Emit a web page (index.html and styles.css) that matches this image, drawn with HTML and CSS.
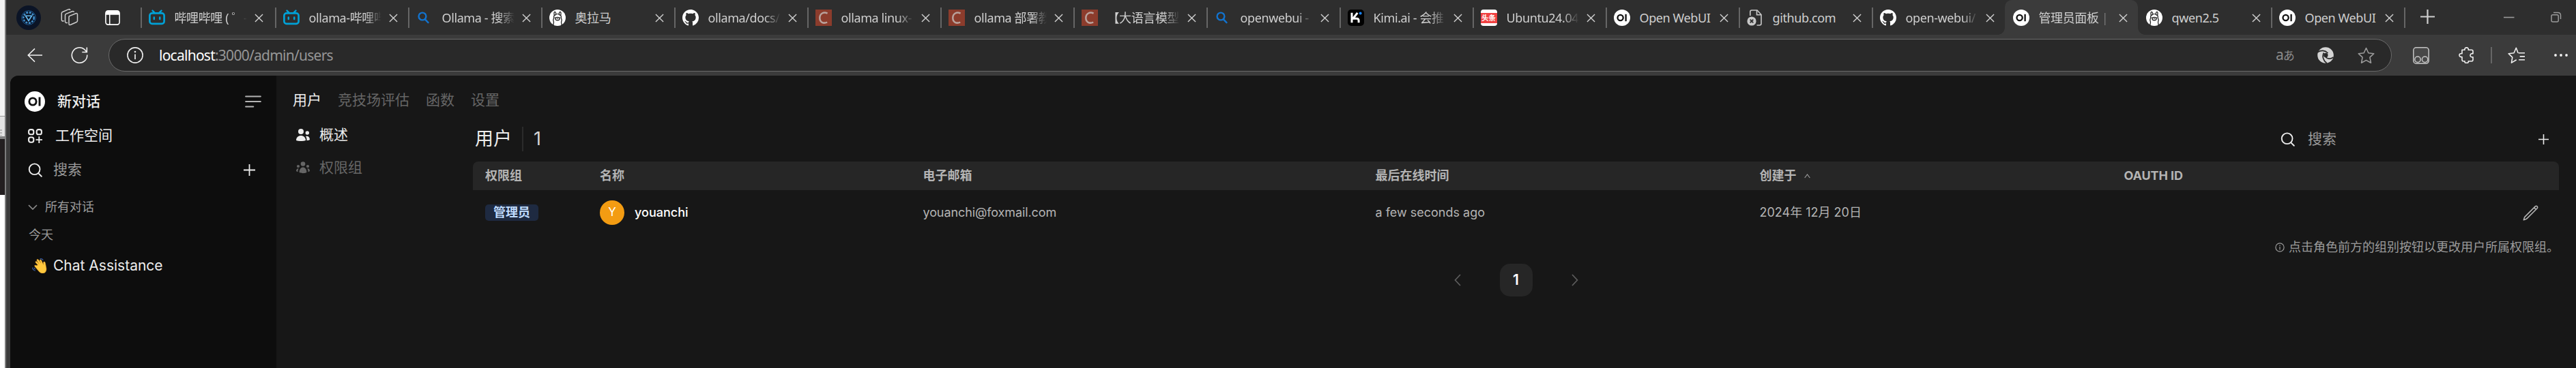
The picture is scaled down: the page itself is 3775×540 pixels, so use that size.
FILE: index.html
```html
<!DOCTYPE html>
<html lang="zh-CN">
<head>
<meta charset="utf-8">
<title>管理员面板 | Open WebUI</title>
<link rel="stylesheet" href="styles.css">
</head>
<body>
<svg class="defs" aria-hidden="true">
  <symbol id="oi" viewBox="0 0 24 24"><circle cx="12" cy="12" r="12" fill="#fff"/><circle cx="9.6" cy="12" r="4.1" fill="none" stroke="#111" stroke-width="2.3"/><path d="M17.6 6.8v10.4" stroke="#111" stroke-width="2.3"/></symbol>
  <symbol id="bili" viewBox="0 0 24 24"><g fill="none" stroke="#00a1d6" stroke-linecap="round"><path d="M5.5 1.6l3 3M18.5 1.6l-3 3" stroke-width="2.4"/><rect x="1.4" y="5.4" width="21.2" height="15.4" rx="3.4" stroke-width="2.7"/><path d="M7.8 11.6v2.4M16.2 11.6v2.4" stroke-width="2.5"/></g></symbol>
  <symbol id="bing" viewBox="0 0 24 24"><g fill="none" stroke="#1273ce" stroke-width="2.4" stroke-linecap="round"><circle cx="9" cy="10" r="5.4"/><path d="M12.900 14.400l4.600 4.800"/></g></symbol>
  <symbol id="llama" viewBox="0 0 24 24"><circle cx="12" cy="12" r="12" fill="#fff"/><g fill="none" stroke="#222" stroke-width="1.3"><path d="M6 24c-.6-3 .8-4 .4-6-.9-2-.9-3.600.4-5.600C6.200 10 7 8.300 8.800 8c1.800-1.800 4.600-1.800 6.400 0 1.800.3 2.600 2 2 4.400 1.300 2 1.300 3.600.4 5.600-.4 2 1 3 .4 6"/><path d="M7.300 8.600C6.700 5 7 3.300 8 3.300s1.700 1.700 1.800 4M16.700 8.600c.6-3.600.3-5.300-.7-5.300s-1.700 1.700-1.800 4"/><ellipse cx="12" cy="13.600" rx="3" ry="2.300"/></g><circle cx="8.400" cy="12" r=".8" fill="#222"/><circle cx="15.600" cy="12" r=".8" fill="#222"/><circle cx="12" cy="13.400" r=".8" fill="#222"/></symbol>
  <symbol id="github" viewBox="0 0 16 16"><path fill="#fff" d="M8 0C3.580 0 0 3.580 0 8c0 3.540 2.290 6.530 5.470 7.590.4.070.55-.17.55-.38 0-.19-.01-.82-.01-1.490-2.010.37-2.530-.49-2.690-.94-.09-.23-.48-.94-.82-1.130-.28-.15-.68-.52-.01-.53.63-.01 1.080.58 1.230.82.72 1.210 1.870.87 2.330.66.070-.52.28-.87.51-1.070-1.780-.2-3.640-.89-3.640-3.950 0-.87.31-1.590.82-2.150-.08-.2-.36-1.020.08-2.120 0 0 .67-.21 2.200.82.64-.18 1.320-.27 2-.27s1.360.09 2 .27c1.530-1.040 2.200-.82 2.200-.82.44 1.100.16 1.920.08 2.120.51.56.82 1.270.82 2.150 0 3.070-1.870 3.750-3.650 3.950.29.25.54.73.54 1.480 0 1.070-.01 1.930-.01 2.200 0 .21.15.46.55.38A8.010 8.010 0 0 0 16 8c0-4.420-3.580-8-8-8z"/></symbol>
  <symbol id="csdn" viewBox="0 0 24 24"><path fill="#8c3c2c" d="M0 0h24v24H0z"/><path d="M17.600 5.600C12 2.600 6.300 6 6.300 12.300c0 6.500 5.200 8.800 10.900 6.300" fill="none" stroke="#b9a29c" stroke-width="2.500"/></symbol>
  <symbol id="kimi" viewBox="0 0 24 24"><rect width="24" height="24" rx="5" fill="#000"/><path d="M6 4.800v14.400M7 13.200h6.400c2.200 0 2.700 1.200 2.700 3v3M8 13l6.300-8.200" fill="none" stroke="#fff" stroke-width="3"/><circle cx="18.600" cy="5.600" r="2" fill="#1783ff"/></symbol>
  <symbol id="page" viewBox="0 0 24 24"><g fill="none" stroke="#c8c8c8" stroke-width="1.600"><path d="M4.800 9V3.500C4.800 2 5.600 1 7 1h8l6 6.500v13c0 1.600-1 2.500-2.500 2.500h-4"/><path d="M14.500 1v6.700H21"/></g><circle cx="7" cy="17" r="6.600" fill="#c8c8c8"/><path d="M4.700 14.700l4.600 4.600M9.300 14.700l-4.600 4.600" stroke="#2e2e2e" stroke-width="1.900"/></symbol>
  <symbol id="x" viewBox="0 0 14 14"><path d="M1 1l12 12M13 1L1 13" fill="none" stroke="#d0d0d0" stroke-width="1.500"/></symbol>
  <symbol id="search" viewBox="0 0 24 24"><g fill="none" stroke="currentColor" stroke-width="2.200" stroke-linecap="round"><circle cx="11" cy="10.600" r="9"/><path d="M17.600 17.600l5 5"/></g></symbol>
  <symbol id="plus" viewBox="0 0 16 16"><path d="M8 0v16M0 8h16" stroke="currentColor" stroke-width="1.700"/></symbol>
</svg>

<div class="screen">
  <div class="behind"><i class="pane"></i><i class="grip"></i><i class="dark"></i></div>
  <div class="window">
    <div class="tabstrip">
      <svg class="profile" viewBox="0 0 36 36"><circle cx="18" cy="18" r="18" fill="#0b1426"/><g fill="none"><circle cx="18" cy="18" r="10.300" stroke="#1d5a93" stroke-width="1"/><circle cx="18" cy="18" r="7.700" stroke="#3f8cc8" stroke-width="2.600" stroke-dasharray="3 1.600"/><path d="M13.500 15.200h9L18 22.500z" stroke="#69bdf2" stroke-width="1.600"/></g></svg>
      <svg class="stack" viewBox="0 0 26 26"><g fill="none" stroke="#cfcfcf" stroke-width="1.500" stroke-linejoin="round"><path d="M12.600 11.600l9.500-3.800q2.400-.8 2.400 1.500v9.200q0 1.400-1.400 2l-8.600 3.700q-2.500 1-2.500-1.500v-9.200q0-1.300.6-1.900z"/><path d="M10 21.200c-2 .7-3.500.4-3.500-1.600v-9.200q0-1.500 1.300-2l9-3.700q2.200-.7 2.700 1"/><path d="M5 18.600c-2.500.8-3.700.2-3.700-1.800V7.500q0-1.500 1.400-2l8.400-3.600q2.200-.8 2.900.8"/></g></svg>
      <svg class="vtabs" viewBox="0 0 22 22"><rect x=".9" y=".9" width="20.200" height="20.200" rx="3.500" fill="none" stroke="#fff" stroke-width="1.600"/><path d="M1 6.700V4Q1 1 4 1h14q3 0 3 3v2.700zM6 6h1.500v15H6z" fill="#fff"/></svg>
      <div class="tabs">
        <div class="tab"><i></i><svg><use href="#bili"/></svg><span class="fade">哔哩哔哩 ( ゜-</span><svg class="x"><use href="#x"/></svg></div>
        <div class="tab"><i></i><svg><use href="#bili"/></svg><span class="fade">ollama-哔哩哔</span><svg class="x"><use href="#x"/></svg></div>
        <div class="tab"><i></i><svg><use href="#bing"/></svg><span class="fade">Ollama - 搜索</span><svg class="x"><use href="#x"/></svg></div>
        <div class="tab"><i></i><svg><use href="#llama"/></svg><span>奥拉马</span><svg class="x"><use href="#x"/></svg></div>
        <div class="tab"><i></i><svg><use href="#github"/></svg><span class="fade">ollama/docs/</span><svg class="x"><use href="#x"/></svg></div>
        <div class="tab"><i></i><svg><use href="#csdn"/></svg><span class="fade">ollama linux-</span><svg class="x"><use href="#x"/></svg></div>
        <div class="tab"><i></i><svg><use href="#csdn"/></svg><span class="fade">ollama 部署教</span><svg class="x"><use href="#x"/></svg></div>
        <div class="tab"><i></i><svg><use href="#csdn"/></svg><span class="fade">【大语言模型</span><svg class="x"><use href="#x"/></svg></div>
        <div class="tab"><i></i><svg><use href="#bing"/></svg><span class="fade">openwebui -</span><svg class="x"><use href="#x"/></svg></div>
        <div class="tab"><i></i><svg><use href="#kimi"/></svg><span class="fade">Kimi.ai - 会推</span><svg class="x"><use href="#x"/></svg></div>
        <div class="tab"><i></i><b class="toutiao">头条</b><span class="fade">Ubuntu24.04</span><svg class="x"><use href="#x"/></svg></div>
        <div class="tab"><i></i><svg><use href="#oi"/></svg><span>Open WebUI</span><svg class="x"><use href="#x"/></svg></div>
        <div class="tab"><i></i><svg><use href="#page"/></svg><span>github.com</span><svg class="x"><use href="#x"/></svg></div>
        <div class="tab"><i></i><svg><use href="#github"/></svg><span class="fade">open-webui/</span><svg class="x"><use href="#x"/></svg></div>
        <div class="tab active"><i></i><svg><use href="#oi"/></svg><span class="fade">管理员面板 |</span><svg class="x"><use href="#x"/></svg></div>
        <div class="tab"><i class="none"></i><svg><use href="#llama"/></svg><span>qwen2.5</span><svg class="x"><use href="#x"/></svg></div>
        <div class="tab"><i></i><svg><use href="#oi"/></svg><span>Open WebUI</span><svg class="x"><use href="#x"/></svg></div>
        <div class="tab end"><i></i></div>
      </div>
      <svg class="newtab"><use href="#plus"/></svg>
      <svg class="min" viewBox="0 0 16 16"><path d="M0 8.500h15.500" stroke="#9a9a9a" stroke-width="1.600"/></svg>
      <svg class="restore" viewBox="0 0 16 16"><g fill="none" stroke="#9a9a9a" stroke-width="1.500"><rect x="1" y="4.700" width="10.200" height="10.300" rx="2"/><path d="M4 1.500h6.500q4 0 4 4V11"/></g></svg>
    </div>

    <div class="toolbar">
      <svg class="back" viewBox="0 0 24 24"><path d="M24 12H1.500M12 1.500L1.300 12 12 22.500" fill="none" stroke="#f2f2f2" stroke-width="1.600"/></svg>
      <svg class="reload" viewBox="0 0 24 24"><path d="M23.200 11.500A11.200 11.200 0 1 1 19.500 3.700L22.500 7M22.800.5v7h-7" fill="none" stroke="#f2f2f2" stroke-width="1.600"/></svg>
      <div class="address">
        <svg class="info" viewBox="0 0 24 24"><circle cx="12" cy="12" r="11.100" fill="none" stroke="#ececec" stroke-width="1.600"/><path d="M12 10.500v7.500" stroke="#ececec" stroke-width="1.700"/><circle cx="12" cy="7" r="1.300" fill="#ececec"/></svg>
        <div class="url"><b>localhost</b>:3000/admin/users</div>
        <div class="lang">a<small>あ</small></div>
        <svg class="swirl" viewBox="0 0 24 24"><circle cx="12" cy="12" r="11.800" fill="#d4d4d4"/><g fill="none" stroke="#292929" stroke-width="1.700"><path d="M.5 7.500C5 4.500 11 4.500 15.500 9"/><path d="M9.500 8.500C6.500 13 8.500 20 14 24"/><path d="M23.500 15C19 18.500 14.500 17.500 12 14.500"/></g><circle cx="12.300" cy="12" r="3.200" fill="#292929"/></svg>
        <svg class="star" viewBox="0 0 24 24"><path d="M12 1.400l3.200 7 7.600.9-5.600 5.200 1.500 7.800L12 18.600l-6.700 3.700 1.500-7.800L1.200 9.300l7.600-.9z" fill="none" stroke="#9c9c9c" stroke-width="1.500" stroke-linejoin="round"/></svg>
      </div>
      <svg class="ext1" viewBox="0 0 24 25"><g fill="none" stroke="#c4c4c4" stroke-width="1.500"><rect x=".8" y=".8" width="22.400" height="23.400" rx="4" fill="#484848"/><circle cx="7" cy="18.300" r="4.200"/><circle cx="17.600" cy="18.300" r="4.200"/></g></svg>
      <svg class="puzzle" viewBox="0 0 24 24"><path d="M5 4.300h4C8.600 2 9.800.900 11.600.900S14.700 2 14.300 4.300H19q2 0 2 2v3.400c-2-.4-4 .4-4 2.500s2 2.900 4 2.500v4q0 2-2 2h-4.700c.4 2-.7 2.700-2.700 2.700s-3-.7-2.600-2.700H7q-2 0-2-2v-4.200c-2.500.4-4-.8-4-2.500s1.500-2.800 4-2.400z" fill="none" stroke="#f0f0f0" stroke-width="1.600" stroke-linejoin="round"/></svg>
      <i class="bar"></i>
      <svg class="favs" viewBox="0 0 24 24"><path d="M15 8.400h9M17 13.300h7M15.500 18h8.500" stroke="#f0f0f0" stroke-width="1.600"/><path d="M14.500 8.400L11.800 1.200 8.700 8.400l-7.600.9 5.400 5.200-1.300 7.700 7-4.200" fill="none" stroke="#f0f0f0" stroke-width="1.500" stroke-linejoin="round"/></svg>
      <svg class="dots" viewBox="0 0 20 4"><g fill="#f0f0f0"><circle cx="2" cy="2" r="1.900"/><circle cx="10" cy="2" r="1.900"/><circle cx="18" cy="2" r="1.900"/></g></svg>
    </div>

    <div class="page">
      <aside class="side">
        <div class="row new"><svg class="logo"><use href="#oi"/></svg><span>新对话</span><svg class="burger" viewBox="0 0 24 18"><path d="M1.200 1.500h21.600M1.200 9h21.600M1.200 16.500h11" stroke="#b4b4b4" stroke-width="2.200" stroke-linecap="round"/></svg></div>
        <div class="row work"><svg viewBox="0 0 21 21"><g fill="none" stroke="#ececec" stroke-width="2.100"><rect x="1.100" y="1.100" width="7.200" height="7.200" rx="2.600"/><rect x="12.700" y="1.100" width="7.200" height="7.200" rx="2.600"/><rect x="1.100" y="12.500" width="7.200" height="7.200" rx="2.600"/><path d="M16.300 11.300v9.600M11.500 16.100h9.600" stroke-width="1.900"/></g></svg><span>工作空间</span></div>
        <div class="row find"><svg class="s"><use href="#search"/></svg><span>搜索</span><svg class="p"><use href="#plus"/></svg></div>
        <div class="row all"><svg viewBox="0 0 14 8"><path d="M1 1l6 6 6-6" fill="none" stroke="#8a8a8a" stroke-width="1.700"/></svg><span>所有对话</span></div>
        <div class="row today">今天</div>
        <div class="row chat"><svg viewBox="0 0 22 22"><path d="M9.500 10L6.300 6.400q-.8-1.300.3-1.900.9-.4 1.700.5l3 3.400-3.100-5Q7.600 2 8.700 1.500q1-.3 1.800.8l3.500 5-1.600-3.600q-.4-1.300.7-1.600 1-.2 1.500.8l3.100 6.600-.2-3q0-1.500 1.300-1.500 1.300.2 1.600 1.900l1.500 7.800c.4 4.600-1.800 7-4.800 7.300-2.400.2-4.600-.9-6.300-3L5 11.900q-.7-1.200.2-1.700.8-.4 1.800.5z" transform="translate(-1 0)" fill="#ffc83d" stroke="#e0982c" stroke-width=".5"/><path d="M.7 13.500q.3 4 4 4.700M3.300 13.700q0 1.800 1.500 2.300M11.500.8q3-.6 4.800 2" fill="none" stroke="#3a5fa8" stroke-width="1.200"/></svg><span>Chat Assistance</span></div>
      </aside>
      <main class="main">
        <nav class="top"><span class="on">用户</span><span>竞技场评估</span><span>函数</span><span>设置</span></nav>
        <div class="body">
          <nav class="sub">
            <div class="on"><svg viewBox="0 0 20 18" fill="currentColor"><circle cx="7" cy="4" r="4"/><circle cx="16.300" cy="6" r="2.700"/><path d="M0 17c0-9.300 14-9.300 14 0-4 1.400-10 1.400-14 0zM15.500 17.200c.2-2.800-.5-4.700-1.500-6 3-1.400 6 .8 6 4.800-1.200.8-2.800 1.200-4.500 1.200z"/></svg>概述</div>
            <div><svg viewBox="0 0 20 18" fill="currentColor"><circle cx="10" cy="3.500" r="3.300"/><circle cx="3" cy="7" r="2.100"/><circle cx="17" cy="7" r="2.100"/><path d="M4.600 16c0-10 10.800-10 10.800 0-3 1.600-7.800 1.600-10.800 0zM0 14c0-2.700 1.700-4.200 3.800-3.800-1 1.400-1.400 3-1.300 5Q1 15 0 14zM20 14c0-2.700-1.700-4.200-3.800-3.800 1 1.400 1.400 3 1.300 5Q19 15 20 14z"/></svg>权限组</div>
          </nav>
          <section class="users">
            <div class="head"><h1>用户</h1><i></i><span class="count">1</span><svg class="s"><use href="#search"/></svg><span class="q">搜索</span><svg class="p"><use href="#plus"/></svg></div>
            <div class="grid th"><span>权限组</span><span>名称</span><span>电子邮箱</span><span>最后在线时间</span><span class="created">创建于<svg viewBox="0 0 9 7"><path d="M.7 6l3.800-5 3.800 5" fill="none" stroke="#9b9b9b" stroke-width="1.200"/></svg></span><span class="oauth">OAUTH ID</span></div>
            <div class="grid tr"><span><b class="badge">管理员</b></span><span class="who"><em>Y</em><b>youanchi</b></span><span class="mail">youanchi@foxmail.com</span><span>a few seconds ago</span><span>2024年 12月 20日</span><span class="edit"><svg viewBox="0 0 24 24"><path d="m16.862 4.487 1.687-1.688a1.875 1.875 0 1 1 2.652 2.652L6.832 19.820a4.500 4.500 0 0 1-1.897 1.130l-2.685.8.8-2.685a4.500 4.500 0 0 1 1.130-1.897L16.863 4.487Zm0 0L19.500 7.125" fill="none" stroke="#b4b4b4" stroke-width="1.500" stroke-linejoin="round"/></svg></span></div>
            <div class="note"><svg viewBox="0 0 14 14"><circle cx="7" cy="7" r="6.100" fill="none" stroke="#9b9b9b" stroke-width="1.200"/><path d="M7 6v4.600M7 3.400v1.500" stroke="#9b9b9b" stroke-width="1.200"/></svg>点击角色前方的组别按钮以更改用户所属权限组。</div>
            <div class="pager"><svg viewBox="0 0 10 18"><path d="M9 1L1.500 9 9 17" fill="none" stroke="#5e5e5e" stroke-width="1.700"/></svg><span>1</span><svg viewBox="0 0 10 18"><path d="M1 1l7.500 8L1 17" fill="none" stroke="#5e5e5e" stroke-width="1.700"/></svg></div>
          </section>
        </div>
      </main>
    </div>
  </div>
</div>
</body>
</html>
```

FILE: styles.css
```css
* { box-sizing: border-box; }
body { margin: 0; background: #171717; overflow: hidden; }
svg { display: block; flex: none; }
.defs { display: none; }
.screen { display: flex; width: 3775px; height: 540px; overflow: hidden; }

/* strip of the windows that lie behind the browser */
.behind { width: 9px; height: 540px; background: #fff; border-right: 2px solid #7c7c7c; display: flex; flex-direction: column; flex: none; }
.behind .pane { height: 171px; background: #f2f2f2; border-bottom: 1px solid #999; }
.behind .grip { height: 29px; background: repeating-linear-gradient(#e3e3e3 0 2px, #b4b4b4 2px 4px) 0 17px / 3px 11px no-repeat #e3e3e3; }
.behind .dark { height: 86px; background: #231f20; border-top: 4px solid #808080; }

.window { flex: 1; min-width: 0; background: #3b3b3b; }
.tabstrip { display: flex; height: 51px; background: #2e2e2e; font: 18px/24px "Noto Sans", "Noto Sans CJK SC", sans-serif; color: #cfcfcf; }
.profile { width: 36px; height: 36px; margin: 8px 0 0 15px; }
.stack { width: 26px; height: 26px; margin: 12px 0 0 29px; }
.vtabs { width: 22px; height: 22px; margin: 15px 0 0 39px; }
.tabs { display: flex; margin-left: 29.500px; }
.tab { display: flex; width: 195px; height: 51px; padding-top: 14px; flex: none; }
.tab:first-child { width: 197px; }
.tab.end { width: 2px; }
.tab > i { width: 2px; height: 30px; margin-top: -3px; background: #666; flex: none; }
.tab > i.none { background: none; }
.tab > svg { width: 24px; height: 24px; margin-left: 10px; }
.tab > span { width: 106px; margin-left: 14px; overflow: hidden; white-space: nowrap; letter-spacing: -.4px; }
.fade { -webkit-mask-image: linear-gradient(90deg, #000 78%, transparent 100%); mask-image: linear-gradient(90deg, #000 78%, transparent 100%); }
.tab > .x { width: 13px; height: 13px; margin: 6px 0 0 11px; }
.active { position: relative; background: #3b3b3b; border-radius: 10px 10px 0 0; }
.active > i { background: none; }
.active::before, .active::after { content: ""; position: absolute; bottom: 0; width: 10px; height: 10px; }
.active::before { left: -10px; background: radial-gradient(circle at 0 0, #2e2e2e 9.500px, #3b3b3b 10px); }
.active::after { right: -10px; background: radial-gradient(circle at 100% 0, #2e2e2e 9.500px, #3b3b3b 10px); }
.toutiao { width: 24px; height: 24px; margin-left: 10px; border-radius: 4px; background: linear-gradient(#fff 5px, #f04142 5px 20px, #fff 20px); color: #fff; font: 700 10.500px/24px "Noto Sans CJK SC", sans-serif; text-align: center; flex: none; }
.newtab { width: 21px; height: 21px; margin: 14px 0 0 22px; color: #cfcfcf; }
.min { width: 16px; height: 16px; margin: 17px 0 0 101px; }
.restore { width: 16px; height: 16px; margin: 17px 0 0 53px; }

.toolbar { display: flex; align-items: center; height: 60px; }
.back { width: 24px; height: 22px; margin-left: 30px; }
.reload { width: 25px; height: 24px; margin-left: 41px; }
.address { display: flex; align-items: center; width: 3346px; height: 48px; margin-left: 30px; border: 1px solid #6a6a6a; border-radius: 24px; background: #292929; flex: none; }
.info { width: 24px; height: 24px; margin-left: 26px; }
.url { margin-left: 23px; flex: 1; font: 21px/30px "Noto Sans", sans-serif; color: #969696; letter-spacing: -.750px; }
.url b { font-weight: 400; color: #fff; }
.lang { width: 26px; font: 21px/26px "Noto Sans", "Noto Sans CJK JP", sans-serif; color: #8c8c8c; white-space: nowrap; letter-spacing: -1px; }
.lang small { font-size: 17px; }
.swirl { width: 24px; height: 24px; margin-left: 35px; }
.star { width: 25px; height: 25px; margin: 0 24px 0 35px; }
.ext1 { width: 24px; height: 25px; margin-left: 31px; }
.puzzle { width: 24px; height: 24px; margin-left: 43px; }
.bar { width: 1.500px; height: 24px; margin-left: 23px; background: #666; }
.favs { width: 25px; height: 25px; margin-left: 23px; }
.dots { width: 20px; height: 4px; margin-left: 43px; }

.page { display: flex; height: 429px; margin-left: 6px; border-radius: 12px 0 0 0; overflow: hidden; background: #171717; font: 21px/30px Inter, "Noto Sans CJK SC", sans-serif; color: #ececec; }
.side { width: 390px; background: #0d0d0d; flex: none; padding-top: 13px; }
.row { display: flex; align-items: center; height: 50px; }
.new span { font-weight: 500; }
.logo { width: 30px; height: 30px; margin: 0 18px 0 21px; }
.burger { width: 24px; height: 18px; margin-left: auto; margin-right: 22px; }
.work svg { width: 21px; height: 21px; margin: 0 19px 0 26px; }
.find { color: #9b9b9b; }
.find .s { width: 21px; height: 21px; margin: 0 16px 0 26px; color: #ececec; }
.find .p { width: 17px; height: 17px; margin-left: auto; margin-right: 31px; color: #ececec; }
.all { height: 42px; margin-top: 9px; font-size: 18px; color: #9b9b9b; }
.all svg { width: 14px; height: 8px; margin: 0 11px 0 26px; }
.today { height: 40px; padding-left: 27px; font-size: 18px; color: #9b9b9b; }
.chat { height: 50px; }
.chat svg { width: 22px; height: 22px; margin: 0 9px 0 32px; }

.main { flex: 1; min-width: 0; }
.top { display: flex; gap: 24px; height: 48px; padding-left: 24px; margin-top: 12px; line-height: 48px; color: #666; }
.on { color: #ececec; }
.body { display: flex; }
.sub { width: 288px; padding: 3px 0 0 29px; flex: none; color: #666; }
.sub div { display: flex; align-items: center; height: 48px; gap: 14px; }
.sub svg { width: 20px; height: 18px; }
.users { width: 3057px; }
.head { display: flex; align-items: center; height: 66px; padding-left: 3px; }
.head h1 { margin: 0; font-size: 27px; font-weight: 400; line-height: 36px; }
.head i { width: 2px; height: 36px; margin: 0 15px; background: #2b2b2b; }
.count { font-size: 27px; color: #d4d4d4; }
.head .s { width: 21px; height: 21px; margin-left: auto; }
.q { width: 338px; margin-left: 19px; color: #9b9b9b; }
.head .p { width: 15px; height: 15px; margin-right: 15px; }
.grid { display: grid; grid-template-columns: 168px 473.500px 663px 563px 534px 1fr; padding: 0 29px 0 18px; align-items: center; font-size: 18px; color: #b4b4b4; }
.th { height: 42px; background: #262626; border-radius: 8px 8px 0 0; font-weight: 700; }
.oauth { letter-spacing: -.1px; }
.created { display: flex; align-items: center; gap: 11px; }
.created svg { width: 9px; height: 7px; }
.tr { height: 66px; }
.mail { letter-spacing: -.1px; }
.badge { display: block; width: 78px; height: 24px; border-radius: 5px; background: #1e2a41; color: #bfdbfe; text-align: center; line-height: 24px; }
.who { display: flex; align-items: center; gap: 15px; }
.who em { width: 36px; height: 36px; border-radius: 50%; background: #f39c12; color: #fff; font-style: normal; font-size: 17px; line-height: 35px; text-align: center; }
.who b { color: #fff; font-weight: 500; }
.edit svg { width: 25px; height: 25px; margin-left: auto; }
.note { display: flex; align-items: center; justify-content: flex-end; gap: 6px; height: 35px; font-size: 18px; color: #9b9b9b; }
.note svg { width: 14px; height: 14px; }
.pager { display: flex; align-items: center; justify-content: center; gap: 57px; height: 48px; margin-top: 7px; }
.pager svg { width: 10px; height: 18px; }
.pager span { width: 48px; height: 48px; border-radius: 15px; background: #262626; color: #fff; font-weight: 600; text-align: center; line-height: 47px; }
```
